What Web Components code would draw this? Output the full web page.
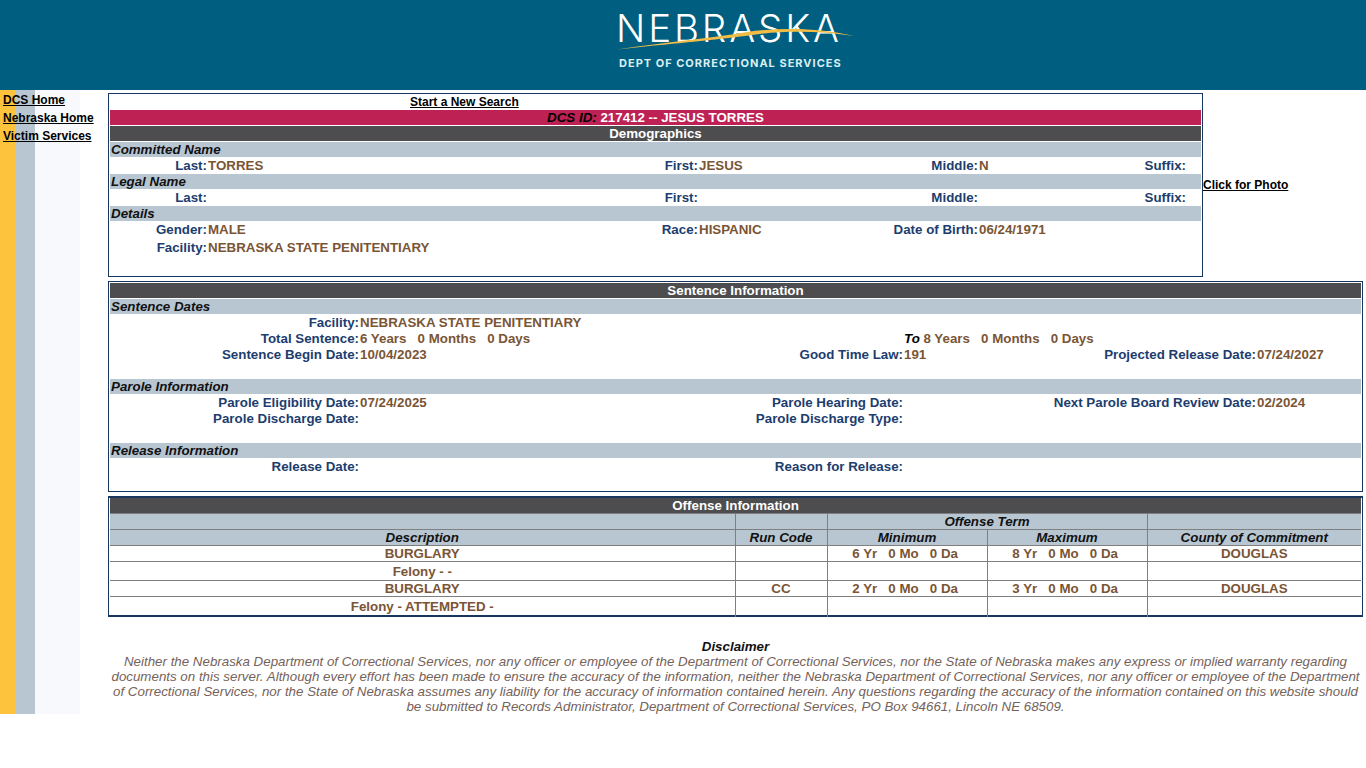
<!DOCTYPE html>
<html lang="en"><head><meta charset="utf-8"><title>DCS Inmate Details</title>
<style>
html,body{margin:0;padding:0;background:#fff;font:bold 13.33px/16px "Liberation Sans",Arial,sans-serif}
</style></head><body>
<dcs-page>
  <dcs-header slot="header"></dcs-header>
  <dcs-side slot="side">
    <dcs-link>DCS Home</dcs-link><dcs-link>Nebraska Home</dcs-link><dcs-link>Victim Services</dcs-link>
  </dcs-side>
  <dcs-box style="--w:1095px;--h:184px">
    <dcs-start>Start a New Search</dcs-start>
    <dcs-band kind="crimson"><i>DCS ID:</i> 217412 -- JESUS TORRES</dcs-band>
    <dcs-band kind="dark">Demographics</dcs-band>
    <dcs-band>Committed Name</dcs-band>
    <dcs-fields cols="a"><dcs-f l="Last:">TORRES</dcs-f><dcs-f l="First:">JESUS</dcs-f><dcs-f l="Middle:">N</dcs-f><dcs-f l="Suffix:"></dcs-f></dcs-fields>
    <dcs-band>Legal Name</dcs-band>
    <dcs-fields cols="a"><dcs-f l="Last:"></dcs-f><dcs-f l="First:"></dcs-f><dcs-f l="Middle:"></dcs-f><dcs-f l="Suffix:"></dcs-f></dcs-fields>
    <dcs-band>Details</dcs-band>
    <dcs-fields cols="a"><dcs-f l="Gender:">MALE</dcs-f><dcs-f l="Race:">HISPANIC</dcs-f><dcs-f l="Date of Birth:">06/24/1971</dcs-f></dcs-fields>
    <dcs-fields cols="a" tall><dcs-f l="Facility:">NEBRASKA STATE PENITENTIARY</dcs-f></dcs-fields>
    <dcs-link slot="aside" photo>Click for Photo</dcs-link>
  </dcs-box>
  <dcs-box style="--h:211px" wide>
    <dcs-band kind="dark">Sentence Information</dcs-band>
    <dcs-band>Sentence Dates</dcs-band>
    <dcs-fields cols="b"><dcs-f l="Facility:">NEBRASKA STATE PENITENTIARY</dcs-f></dcs-fields>
    <dcs-fields cols="b"><dcs-f l="Total Sentence:">6 Years &nbsp; 0 Months &nbsp; 0 Days</dcs-f><dcs-f l=""><i>To</i> 8 Years &nbsp; 0 Months &nbsp; 0 Days</dcs-f></dcs-fields>
    <dcs-fields cols="b" gap><dcs-f l="Sentence Begin Date:">10/04/2023</dcs-f><dcs-f l="Good Time Law:">191</dcs-f><dcs-f l="Projected Release Date:">07/24/2027</dcs-f></dcs-fields>
    <dcs-band>Parole Information</dcs-band>
    <dcs-fields cols="b"><dcs-f l="Parole Eligibility Date:">07/24/2025</dcs-f><dcs-f l="Parole Hearing Date:"></dcs-f><dcs-f l="Next Parole Board Review Date:">02/2024</dcs-f></dcs-fields>
    <dcs-fields cols="b" gap><dcs-f l="Parole Discharge Date:"></dcs-f><dcs-f l="Parole Discharge Type:"></dcs-f></dcs-fields>
    <dcs-band>Release Information</dcs-band>
    <dcs-fields cols="b"><dcs-f l="Release Date:"></dcs-f><dcs-f l="Reason for Release:"></dcs-f></dcs-fields>
  </dcs-box>
  <dcs-offenses></dcs-offenses>
  <dcs-disclaimer>Neither the Nebraska Department of Correctional Services, nor any officer or employee of the Department of Correctional Services, nor the State of Nebraska makes any express or implied warranty regarding documents on this server. Although every effort has been made to ensure the accuracy of the information, neither the Nebraska Department of Correctional Services, nor any officer or employee of the Department of Correctional Services, nor the State of Nebraska assumes any liability for the accuracy of information contained herein. Any questions regarding the accuracy of the information contained on this website should be submitted to Records Administrator, Department of Correctional Services, PO Box 94661, Lincoln NE 68509.</dcs-disclaimer>
</dcs-page>
<script>
function def(name, css, html, init){
  customElements.define(name, class extends HTMLElement{
    constructor(){super();const s=this.attachShadow({mode:'open'});s.innerHTML='<style>'+css+'</style>'+html;}
    connectedCallback(){ if(init) init(this); }
  });
}
def('dcs-page',`
 :host{display:block}
 .main{display:flex;height:624px}
 .content{width:1255px;display:flex;flex-direction:column;padding-top:3px;box-sizing:border-box}
`,`<slot name="header"></slot><div class="main"><slot name="side"></slot><div class="content"><slot></slot></div></div>`);
def('dcs-header',`
 :host{display:flex;justify-content:center;height:90px;background:#005f80;padding-left:108px}
 .logo{position:relative;width:240px;height:90px}
 .n{position:absolute;left:-1px;top:8px;font:300 38.5px/40px Inter,Lato,"Liberation Sans",sans-serif;color:#fff;letter-spacing:2.9px;white-space:nowrap}
 .d{position:absolute;left:2px;top:56px;font:bold 11px/14px Inter,"Open Sans","Liberation Sans",sans-serif;color:#dceef3;letter-spacing:1px;white-space:nowrap}
 svg{position:absolute;left:0;top:0}
`,`<div class="logo"><div class="n">NEBRASKA</div><svg width="240" height="90" viewBox="0 0 240 90" aria-hidden="true"><path d="M0 49.5C50 42 95 38 130 32C165 27 205 28 237 36C205 31 168 30 135 35C100 40 50 44 0 49.5Z" fill="#f2bd45"/></svg><div class="d">DEPT OF CORRECTIONAL SERVICES</div></div>`);
def('dcs-side',`
 :host{display:block;width:108px;flex:none;box-sizing:border-box;padding:1px 0 0 3px;background:linear-gradient(90deg,#fdc33c 0 16px,#b8c6d2 16px 35px,#f7f9fc 35px 80px,#fff 80px)}
 ::slotted(dcs-link){display:block;height:18px;line-height:18px}
`,`<slot></slot>`);
def('dcs-link',`
 :host{font:bold 12px/18px "Liberation Sans",Arial,sans-serif;color:#000;text-decoration:underline;white-space:nowrap}
`,`<slot></slot>`);
def('dcs-start',`
 :host{display:block;height:16px;font:bold 12px/17px "Liberation Sans",Arial,sans-serif;color:#000;padding-left:300px;text-decoration:underline}
`,`<slot></slot>`);
def('dcs-box',`
 :host{display:flex;flex:none;align-items:center;margin-bottom:4px}
 .b{box-sizing:border-box;width:var(--w,1255px);height:var(--h);border:1px solid #17375e;padding:0 1px;display:flex;flex-direction:column;flex:none;background:#fff}
 :host([wide]) .b{padding-top:1px}
 ::slotted(dcs-link){margin-top:-1px}
`,`<div class="b"><slot></slot></div><slot name="aside"></slot>`);
def('dcs-band',`
 :host{display:block;flex:none;height:15px;margin-bottom:1px;font:italic bold 13.33px/15px "Liberation Sans",Arial,sans-serif;background:#b8c6d2;color:#111;padding-left:1px;white-space:nowrap}
 :host([kind=dark]),:host([kind=crimson]){font-style:normal;text-align:center;color:#fff;padding:0}
 :host([kind=dark]){background:#4d4d4f}
 :host([kind=crimson]){background:#be2154}
 ::slotted(i){color:#000}
`,`<slot></slot>`);
def('dcs-fields',`
 :host{display:grid;flex:none;height:16px;font:bold 13.33px/15px "Liberation Sans",Arial,sans-serif;white-space:nowrap}
 :host([cols=a]){grid-template-columns:97px 353px 138px 132px 148px 107px 101px 15px}
 :host([cols=b]){grid-template-columns:249px 290px 254px 100px 253px 106px}
 :host([tall]){height:18px;line-height:20px;align-items:start}
 :host([gap]){height:32px}
`,`<slot></slot>`);
def('dcs-f',`
 :host{display:contents}
 .l{color:#1c3d6e;text-align:right;direction:rtl;unicode-bidi:plaintext}
 .v{color:#7a5535;padding-left:1px;white-space:nowrap}
 ::slotted(i){color:#000}
`,`<span class="l"></span><span class="v"><slot></slot></span>`,el=>{el.shadowRoot.querySelector('.l').textContent=el.getAttribute('l')});
def('dcs-offenses',`
 :host{display:block;flex:none;box-sizing:border-box;width:1255px;height:121px;border:2px solid #17375e;border-left-width:1px;border-right-width:1px;padding:0 1px}
 .t{border-collapse:collapse;table-layout:fixed;width:1251px;font:bold 13.33px/15px "Liberation Sans",Arial,sans-serif;color:#7a5535;text-align:center}
 td,th{border:1px solid #7f7f7f;padding:0;white-space:nowrap;vertical-align:middle}
 tr:first-child th,tr:first-child td{border-top:0}
 tr>*:first-child{border-left:0} tr>*:last-child{border-right:0}
 tr:last-child td{border-bottom:0}
 th{background:#b8c6d2;color:#111;font-style:italic}
 th.d{background:#4d4d4f;color:#fff;font-style:normal;border:0;border-bottom:1px solid #7f7f7f}
`,`<table class="t"><colgroup><col style="width:625px"><col style="width:92px"><col style="width:160px"><col style="width:160px"><col style="width:214px"></colgroup>
<tr style="height:15px"><th class="d" colspan="5">Offense Information</th></tr>
<tr style="height:16px"><th></th><th></th><th colspan="2">Offense Term</th><th></th></tr>
<tr style="height:16px"><th>Description</th><th>Run Code</th><th>Minimum</th><th>Maximum</th><th>County of Commitment</th></tr>
<tr style="height:16px"><td>BURGLARY</td><td></td><td>6 Yr &nbsp; 0 Mo &nbsp; 0 Da&nbsp;</td><td>8 Yr &nbsp; 0 Mo &nbsp; 0 Da&nbsp;</td><td>DOUGLAS</td></tr>
<tr style="height:19px"><td>Felony - -</td><td></td><td></td><td></td><td></td></tr>
<tr style="height:16px"><td>BURGLARY</td><td>CC</td><td>2 Yr &nbsp; 0 Mo &nbsp; 0 Da&nbsp;</td><td>3 Yr &nbsp; 0 Mo &nbsp; 0 Da&nbsp;</td><td>DOUGLAS</td></tr>
<tr style="height:20px"><td>Felony - ATTEMPTED -</td><td></td><td></td><td></td><td></td></tr></table>`);
def('dcs-disclaimer',`
 :host{display:block;flex:none;margin-top:22px;padding:0 3px;text-align:center;font:italic 13.33px/15px "Liberation Sans",Arial,sans-serif;color:#75625a}
 b{display:block;color:#111}
`,`<b>Disclaimer</b><slot></slot>`);
</script>
</body></html>
